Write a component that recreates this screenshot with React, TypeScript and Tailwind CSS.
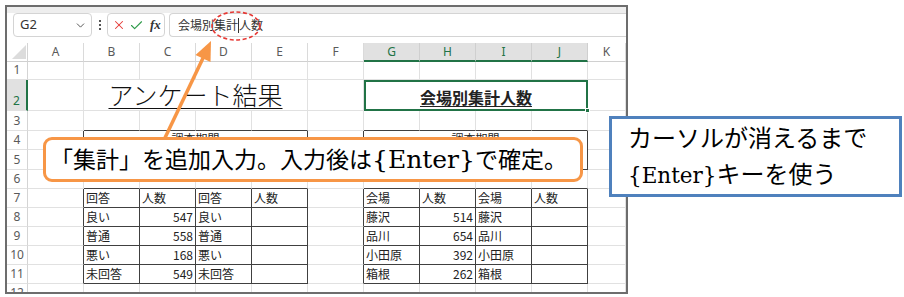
import { Check, ChevronDown, X } from "lucide-react";

const JP = "font-['Noto_Sans_CJK_JP',sans-serif]";
const LATIN_SERIF = "font-['DejaVu_Serif','Liberation_Serif',serif]";
const COLS = ["A", "B", "C", "D", "E", "F", "G", "H", "I", "J", "K"];
const SELECTED_COLS = ["G", "H", "I", "J"];

// right / bottom border: light gridline or dark table rule
const cell = (r = false, b = false) =>
  `border-r border-b ${r ? "border-r-[#404040]" : "border-r-[#e1e1e1]"} ${b ? "border-b-[#404040]" : "border-b-[#e1e1e1]"}`;

const leftRows = [
  ["回答", "人数", "回答", "人数"],
  ["良い", "547", "良い", ""],
  ["普通", "558", "普通", ""],
  ["悪い", "168", "悪い", ""],
  ["未回答", "549", "未回答", ""],
];

const rightRows = [
  ["会場", "人数", "会場", "人数"],
  ["藤沢", "514", "藤沢", ""],
  ["品川", "654", "品川", ""],
  ["小田原", "392", "小田原", ""],
  ["箱根", "262", "箱根", ""],
];

const RowHead = ({ n, selected = false }: { n: number; selected?: boolean }) => (
  <div
    className={`flex items-end justify-center pb-[1px] text-[12px] leading-[16px] border-b border-b-[#e1e1e1] font-['Noto_Sans',sans-serif] ${
      selected
        ? "bg-[#e1e1e1] text-[#217346] border-r-2 border-r-[#217346]"
        : "bg-white text-[#5a5a5a] border-r border-r-[#d4d4d4]"
    }`}
  >
    {n}
  </div>
);

const Blank = ({ r = false, b = false }: { r?: boolean; b?: boolean }) => <div className={cell(r, b)} />;

const TableRow = ({ values }: { values: string[] }) => (
  <>
    {values.map((v, i) => {
      const isNum = /^\d+$/.test(v);
      return (
        <div
          key={i}
          className={`${cell(true, true)} flex items-center px-[2px] text-[12px] leading-none text-[#222] ${JP} ${
            isNum ? "justify-end" : "justify-start"
          }`}
        >
          {v}
        </div>
      );
    })}
  </>
);

const PeriodBox = () => (
  <div className={`col-span-4 row-span-2 ${cell(true, true)} flex justify-center pt-[2px] text-[12px] leading-none text-[#222] ${JP}`}>
    調査期間
  </div>
);

export default function App() {
  return (
    <div className="w-[904px] h-[297px] bg-white relative overflow-hidden pl-[5px] pt-[5px]">
      <div className="w-[623px] h-[289px] border-2 border-[#6d6d6d] flex flex-col overflow-hidden bg-white">
        {/* formula bar */}
        <div className="h-[36px] shrink-0 flex flex-col">
          <div className="h-[6px] bg-[#eeeeee]" />
          <div className="h-[24px] flex pl-[6px]">
            <div className="w-[79px] h-[24px] border border-[#d4d4d4] rounded-[4px] flex items-center justify-between pl-[6px] pr-[4px] bg-white">
              <span className="text-[13px] text-[#333] font-['Noto_Sans',sans-serif]">G2</span>
              <ChevronDown size={13} className="text-[#555]" strokeWidth={1.8} />
            </div>
            <div className="w-[15px] flex flex-col items-center justify-center gap-[2px]">
              <span className="w-[2px] h-[2px] bg-[#555]" />
              <span className="w-[2px] h-[2px] bg-[#555]" />
              <span className="w-[2px] h-[2px] bg-[#555]" />
            </div>
            <div className="w-[58px] h-[24px] border border-[#d4d4d4] rounded-[4px] flex items-center pl-[4px] bg-white">
              <X size={14} className="text-[#e53935]" strokeWidth={1.8} />
              <Check size={15} className="text-[#2e9b4a] ml-[3px]" strokeWidth={1.8} />
              <span className="ml-[6px] text-[13px] italic font-bold text-[#333] font-['Liberation_Serif',serif]">fx</span>
            </div>
            <div className={`flex-1 ml-[4px] h-[24px] border border-r-0 border-[#d4d4d4] rounded-l-[4px] flex items-center pl-[8px] text-[12px] text-[#333] ${JP}`}>
              <span>会場別集計</span>
              <span className="inline-block w-[1px] h-[15px] bg-[#333]" />
              <span>人数</span>
            </div>
          </div>
        </div>

        {/* sheet grid */}
        <div className="shrink-0 grid grid-cols-[21px_repeat(10,56px)_38px] grid-rows-[19px_18px_31px_20px_19px_20px_19px_19px_19px_19px_19px_19px_19px]">
          {/* column headers */}
          <div className="relative bg-white border-r border-r-[#d4d4d4] border-b border-b-[#d0d0d0]">
            <svg className="absolute right-[1px] bottom-[2px]" width="14" height="14" viewBox="0 0 14 14">
              <polygon points="14,0 14,14 0,14" fill="#dcdcdc" />
            </svg>
          </div>
          {COLS.map((c) =>
            SELECTED_COLS.includes(c) ? (
              <div
                key={c}
                className="flex items-center justify-center text-[12px] bg-[#e1e1e1] text-[#217346] border-r border-r-[#cfcfcf] border-b-2 border-b-[#217346] font-['Noto_Sans',sans-serif]"
              >
                {c}
              </div>
            ) : (
              <div
                key={c}
                className="flex items-center justify-center text-[12px] bg-white text-[#5a5a5a] border-r border-r-[#dadada] border-b border-b-[#d0d0d0] font-['Noto_Sans',sans-serif]"
              >
                {c}
              </div>
            )
          )}

          {/* row 1 */}
          <RowHead n={1} />
          {COLS.map((c) => (
            <Blank key={c} />
          ))}

          {/* row 2 */}
          <RowHead n={2} selected />
          <Blank />
          <div className={`col-span-4 ${cell()} flex items-end justify-center pb-[3px]`}>
            <span className={`text-[25px] leading-none text-[#111] underline decoration-1 underline-offset-[3px] ${JP} font-light`}>
              アンケート結果
            </span>
          </div>
          <Blank />
          <div className="col-span-4 relative border-2 border-[#217346] flex items-end justify-center pb-[4px]">
            <span className={`text-[16px] leading-none font-bold text-[#222] underline underline-offset-[2px] ${JP}`}>
              会場別集計人数
            </span>
            <span className="absolute -right-[4px] -bottom-[4px] w-[5px] h-[5px] bg-[#217346] border border-white" />
          </div>
          <Blank />

          {/* row 3 */}
          <RowHead n={3} />
          <Blank />
          <Blank b />
          <Blank b />
          <Blank b />
          <Blank b />
          <Blank />
          <Blank b />
          <Blank b />
          <Blank b />
          <Blank b />
          <Blank />

          {/* row 4 */}
          <RowHead n={4} />
          <Blank r />
          <PeriodBox />
          <Blank r />
          <PeriodBox />
          <Blank />

          {/* row 5 */}
          <RowHead n={5} />
          <Blank r />
          <Blank r />
          <Blank />

          {/* row 6 */}
          <RowHead n={6} />
          <Blank />
          <Blank b />
          <Blank b />
          <Blank b />
          <Blank b />
          <Blank />
          <Blank b />
          <Blank b />
          <Blank b />
          <Blank b />
          <Blank />

          {/* rows 7-11 */}
          {leftRows.map((row, i) => (
            <div key={i} className="contents">
              <RowHead n={7 + i} />
              <Blank r />
              <TableRow values={row} />
              <Blank r />
              <TableRow values={rightRows[i]} />
              <Blank />
            </div>
          ))}

          {/* row 12 */}
          <RowHead n={12} />
          {COLS.map((c) => (
            <Blank key={c} />
          ))}
        </div>
      </div>

      {/* arrow and highlight */}
      <svg className="absolute left-0 top-0 pointer-events-none" width="904" height="297" viewBox="0 0 904 297">
        <line x1="163" y1="142" x2="204" y2="56" stroke="#f79646" strokeWidth="3.5" />
        <polygon points="211,41 210.5,62 195.5,55" fill="#f79646" />
        <ellipse cx="236" cy="26" rx="24" ry="14" fill="none" stroke="#e53935" strokeWidth="1.6" strokeDasharray="4 2.5" />
      </svg>

      {/* orange callout */}
      <div className="absolute left-[43px] top-[137px] w-[540px] h-[45px] border-[3px] border-[#f79646] rounded-[9px] bg-white flex items-center pl-[4px]">
        <span className={`text-[23px] leading-none text-black whitespace-nowrap ${JP}`}>
          「集計」を追加入力。入力後は<span className={`text-[25px] ${LATIN_SERIF}`}>{"{Enter}"}</span>で確定。
        </span>
      </div>

      {/* blue callout */}
      <div className={`absolute left-[609px] top-[116px] w-[293px] h-[81px] border-[3px] border-[#4f81bd] bg-white pl-[16px] text-[24px] leading-[36px] text-black ${JP}`}>
        <div>カーソルが消えるまで</div>
        <div>
          <span className={`text-[21.5px] ${LATIN_SERIF}`}>{"{Enter}"}</span>キーを使う
        </div>
      </div>
    </div>
  );
}
